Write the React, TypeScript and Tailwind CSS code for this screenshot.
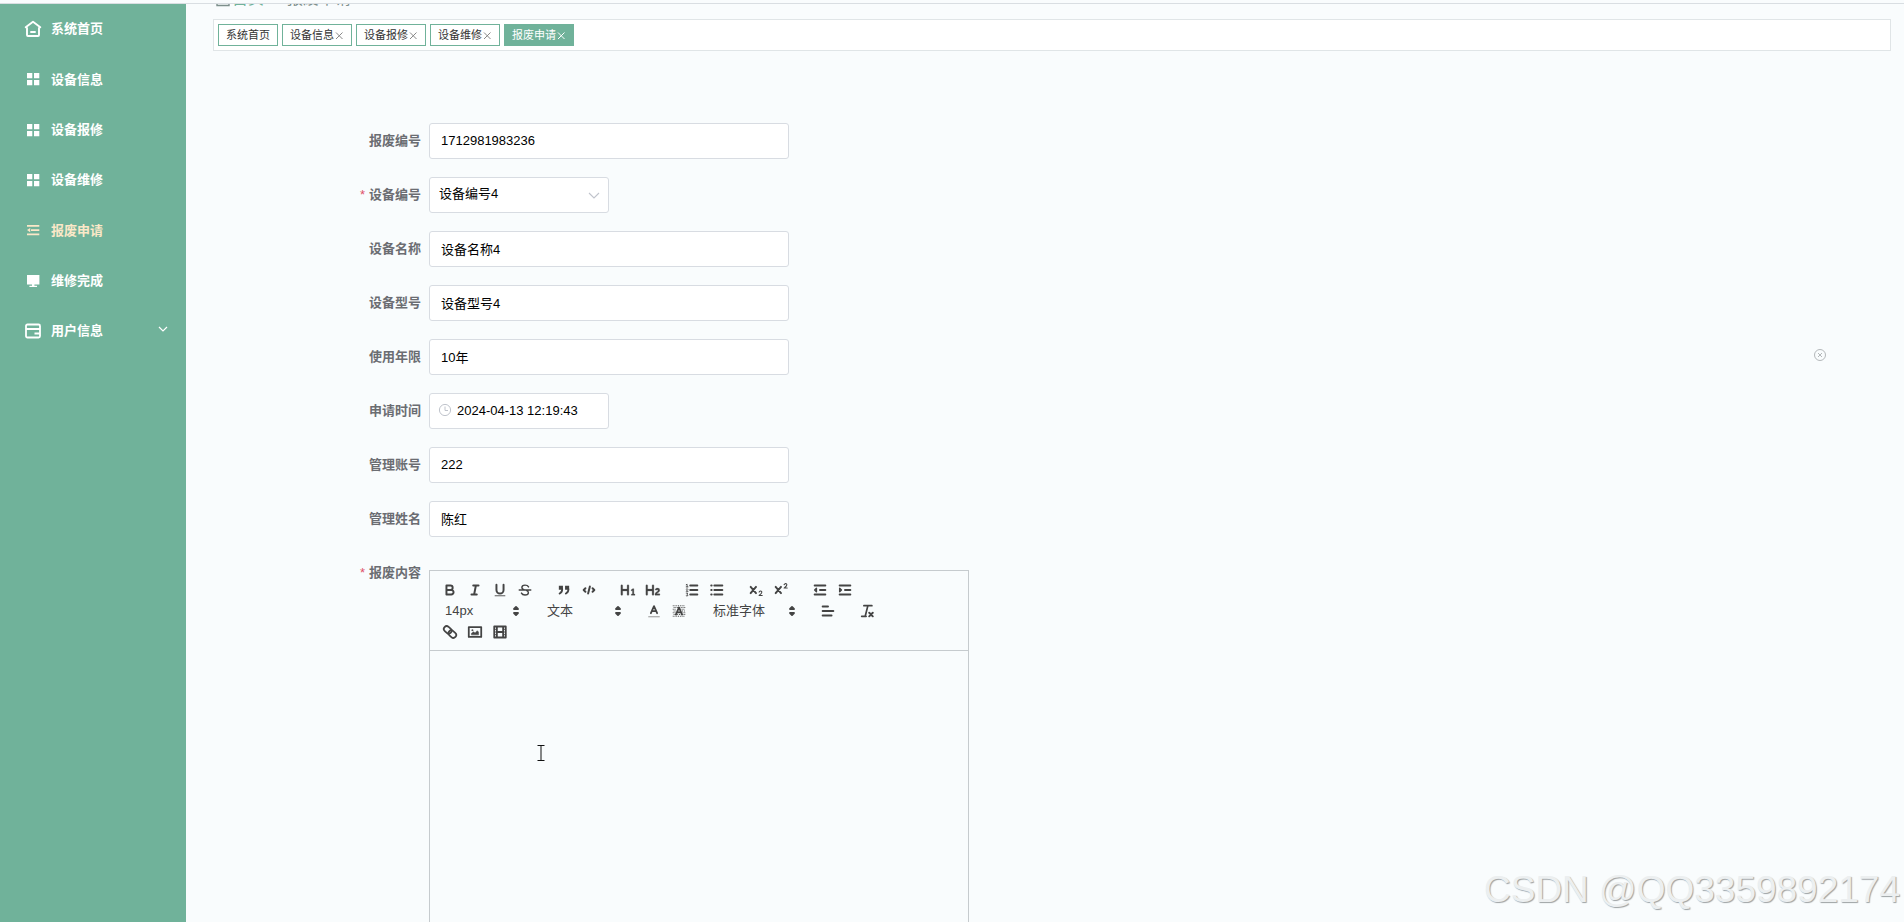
import type { ReactNode } from 'react';

const ink = 'stroke-[#444]';

function Svg({ children, size = 'size-4' }: { children: ReactNode; size?: string }) {
  return (
    <svg viewBox="0 0 18 18" className={`${size} ${ink} fill-none`} strokeWidth="2.2" strokeLinecap="round" strokeLinejoin="round" aria-hidden="true">
      {children}
    </svg>
  );
}

function Home() {
  return (
    <svg viewBox="0 0 18 18" className="size-[18px]" fill="none" stroke="currentColor" strokeWidth="1.9" strokeLinejoin="round" strokeLinecap="round" aria-hidden="true">
      <path d="M9 1.8 L1.7 7.2 L3 8 V15 Q3 16 4 16 H14 Q15 16 15 15 V8 L16.3 7.2 Z" />
      <path d="M7 12 H11" />
    </svg>
  );
}

function Menu() {
  return (
    <svg viewBox="0 0 18 18" className="size-[18px]" fill="currentColor" aria-hidden="true">
      <path d="M3 3H8.3V8.3H3ZM10 3H15.3V8.3H10ZM3 10H8.3V15.3H3ZM10 10H15.3V15.3H10Z" />
    </svg>
  );
}

function Fold() {
  return (
    <svg viewBox="0 0 18 18" className="size-[18px]" fill="currentColor" aria-hidden="true">
      <path d="M3 4H15.3V5.8H3ZM7 8.2H15.3V10H7ZM3 9.1L6.2 7V11.2ZM3 12.4H15.3V14.2H3Z" />
    </svg>
  );
}

function Monitor() {
  return (
    <svg viewBox="0 0 18 18" className="size-[18px]" fill="currentColor" aria-hidden="true">
      <path d="M3 3 H15.4 V12.4 H3 Z M8 12 H10.4 V13.8 H13 V15 H5.4 V13.8 H8 Z" />
    </svg>
  );
}

function Card() {
  return (
    <svg viewBox="0 0 18 18" className="size-[18px]" fill="none" stroke="currentColor" strokeWidth="1.8" aria-hidden="true">
      <rect x="2" y="2.5" width="14" height="13" rx="1.4" />
      <path d="M2 7 H16 M10.5 11.5 H16" />
    </svg>
  );
}

const menu = [
  { label: '系统首页', icon: <Home /> },
  { label: '设备信息', icon: <Menu /> },
  { label: '设备报修', icon: <Menu /> },
  { label: '设备维修', icon: <Menu /> },
  { label: '报废申请', icon: <Fold />, active: true },
  { label: '维修完成', icon: <Monitor /> },
  { label: '用户信息', icon: <Card />, more: true },
];

const tabs = ['设备信息', '设备报修', '设备维修', '报废申请'];

function Cross() {
  return (
    <svg viewBox="0 0 10 11" className="h-[11px] w-[10px]" stroke="currentColor" strokeWidth="1" aria-hidden="true">
      <path d="M2 2.5 L8.5 9 M8.5 2.5 L2 9" />
    </svg>
  );
}

function Row({ id, label, required, children }: { id: string; label: string; required?: boolean; children: ReactNode }) {
  return (
    <div className="flex h-9 items-center">
      <label htmlFor={id} className="w-[216px] shrink-0 pr-2 text-right font-bold text-[#6b6d72]">
        {required && <span className="mr-1 font-normal text-[#e0506a]">*</span>}
        {label}
      </label>
      {children}
    </div>
  );
}

const box = 'h-9 rounded-[3px] border border-[#d8dce2] bg-white pb-[2px] text-[13px] text-black outline-none';

function TextRow({ id, label, value }: { id: string; label: string; value: string }) {
  return (
    <Row id={id} label={label}>
      <input id={id} defaultValue={value} className={`${box} w-[360px] px-[11px]`} />
    </Row>
  );
}

function Tool({ label, children }: { label: string; children: ReactNode }) {
  return (
    <button type="button" aria-label={label} className="flex h-[21px] w-[25px] items-center justify-center">
      {children}
    </button>
  );
}

function Group({ children }: { children: ReactNode }) {
  return <div className="mr-[14px] flex">{children}</div>;
}

function Picker({ label, width }: { label: string; width: string }) {
  return (
    <button type="button" className={`flex h-[21px] items-center justify-between pl-2 text-[13px] text-[#444] ${width}`}>
      {label}
      <svg viewBox="0 0 18 18" className="size-[18px] fill-[#444] stroke-[#444]" strokeWidth="1.8" strokeLinejoin="round" aria-hidden="true">
        <path d="M7 11 L9 13 L11 11 Z M7 7 L9 5 L11 7 Z" />
      </svg>
    </button>
  );
}

function Heading({ two }: { two?: boolean }) {
  return (
    <svg viewBox="0 0 18 18" className="size-4 fill-[#444] stroke-[#444]" strokeWidth=".3" aria-hidden="true">
      <path d="M10,4V14a1,1,0,0,1-2,0V10H3v4a1,1,0,0,1-2,0V4A1,1,0,0,1,3,4V8H8V4a1,1,0,0,1,2,0Z" />
      {two ? (
        <path d="M16.73975,13.81445v.43945a.54085.54085,0,0,1-.605.60547H11.855a.58392.58392,0,0,1-.64893-.60547V14.0127c0-2.90527,3.39941-3.42187,3.39941-4.55469a.77675.77675,0,0,0-.84717-.78125,1.17684,1.17684,0,0,0-.83594.38477c-.2749.26367-.561.374-.85791.13184l-.4292-.34082c-.30811-.24219-.38525-.51758-.1543-.81445a2.97155,2.97155,0,0,1,2.45361-1.17676,2.45393,2.45393,0,0,1,2.68408,2.40918c0,2.45312-3.1792,2.92676-3.27832,3.93848h2.79443A.54085.54085,0,0,1,16.73975,13.81445Z" />
      ) : (
        <path d="M12.8,15 V13.6 H14 V9.6 L13 10.2 L12.3,9.1 L14.3,7.5 H15.6 V13.6 H16.8 V15 Z" />
      )}
    </svg>
  );
}

function Script({ sup }: { sup?: boolean }) {
  return (
    <svg viewBox="0 0 18 18" className="size-4 fill-none stroke-[#444]" strokeLinecap="round" strokeLinejoin="round" aria-hidden="true">
      <path strokeWidth="2.2" d="M3 5.5 L9 12.5 M9 5.5 L3 12.5" />
      <path strokeWidth="1.2" d={sup ? 'M12.5 3 Q14.2 .8 15.5 2.6 Q16 4 12.5 6.8 H16' : 'M12.5 11.3 Q14.2 9.2 15.5 11 Q16 12.4 12.5 15.2 H16'} />
    </svg>
  );
}

function Toolbar() {
  return (
    <div className="flex flex-wrap border-b border-[#c6cbce] px-[7px] pt-2 pb-[8px]">
      <Group>
        <Tool label="粗体"><Svg><path d="M5,4H9.5A2.5,2.5,0,0,1,12,6.5v0A2.5,2.5,0,0,1,9.5,9H5V4ZM5,9h5.5A2.5,2.5,0,0,1,13,11.5v0A2.5,2.5,0,0,1,10.5,14H5V9Z" /></Svg></Tool>
        <Tool label="斜体"><Svg><path d="M7 4H13M5 14H11M8 14L10 4" /></Svg></Tool>
        <Tool label="下划线"><Svg><path d="M5,3V9a4.012,4.012,0,0,0,4,4H9a4.012,4.012,0,0,0,4-4V3" /><path strokeWidth="1" d="M3.5 15.5H14.5" /></Svg></Tool>
        <Tool label="删除线">
          <Svg>
            <path strokeWidth="1.6" d="M2.5 9H15.5M13 5.5Q12 3.5 9 3.5Q5.5 3.5 5.5 6.2Q5.5 8 8.5 8.8M5 12.5Q6 14.6 9 14.6Q12.8 14.6 12.8 12Q12.8 10.2 10.5 9.3" />
          </Svg>
        </Tool>
      </Group>
      <Group>
        <Tool label="引用">
          <svg viewBox="0 0 18 18" className="size-4 fill-[#444] stroke-[#444]" aria-hidden="true">
            <path strokeWidth="2" fill="none" strokeLinecap="round" d="M7,8c0,4.031-3,5-3,5M14,8c0,4.031-3,5-3,5" />
            <path d="M4 5H7V8H4ZM11 5H14V8H11Z" strokeWidth="1.6" />
          </svg>
        </Tool>
        <Tool label="代码"><Svg><path d="M5 7L3 9L5 11M13 7L15 9L13 11M10 5L8 13" /></Svg></Tool>
      </Group>
      <Group>
        <Tool label="标题 1"><Heading /></Tool>
        <Tool label="标题 2"><Heading two /></Tool>
      </Group>
      <Group>
        <Tool label="有序列表">
          <Svg>
            <path d="M7 4H15M7 9H15M7 14H15" />
            <path strokeWidth="1" d="M2.5 5.5H4.5M3.5 5.5V2.5L2.5 3M2.5 8Q4.5 7 4.4 8.4L2.5 10.5H4.5M2.5 12.5H4.2L3.4 14Q5 14.5 4.2 15.5Q3.4 16 2.5 15.5" />
          </Svg>
        </Tool>
        <Tool label="无序列表"><Svg><path d="M6 4H15M6 9H15M6 14H15M2.5 4H3M2.5 9H3M2.5 14H3" /></Svg></Tool>
      </Group>
      <Group>
        <Tool label="下标"><Script /></Tool>
        <Tool label="上标"><Script sup /></Tool>
      </Group>
      <Group>
        <Tool label="减少缩进"><Svg><path d="M3 14H15M3 4H15M9 9H15" /><path fill="#444" strokeWidth="1.6" d="M5 7V11L3 9Z" /></Svg></Tool>
        <Tool label="增加缩进"><Svg><path d="M3 14H15M3 4H15M9 9H15" /><path fill="#444" strokeWidth="1.6" d="M3 7V11L5 9Z" /></Svg></Tool>
      </Group>
      <Group><Picker label="14px" width="w-[88px]" /></Group>
      <Group><Picker label="文本" width="w-[88px]" /></Group>
      <Group>
        <Tool label="文字颜色">
          <Svg><path strokeWidth="1" stroke="#888" d="M3 15.5H15" /><path d="M5.5 11.5L9 3.5L12.5 11.5M6.8 9.2H11.2" strokeWidth="2" /></Svg>
        </Tool>
        <Tool label="背景颜色">
          <Svg>
            <path strokeWidth="1.2" strokeDasharray="1 1" strokeLinecap="butt" d="M2 3H16M3 5H16M2 7H6M12 7H16M3 9H5.5M12.5 9H16M2 11H5M13 11H16M3 13H16M2 15H16" />
            <path d="M5.5 13L9 5L12.5 13M6.8 10.6H11.2" strokeWidth="2" />
          </Svg>
        </Tool>
      </Group>
      <Group><Picker label="标准字体" width="w-[96px]" /></Group>
      <Group><Tool label="对齐"><Svg><path d="M3 9H15M3 14H13M3 4H9" /></Svg></Tool></Group>
      <Group>
        <Tool label="清除格式">
          <Svg><path strokeWidth="1.9" d="M5.5 3H14.5M10 3L7.2 14M3 15H8" /><path d="M11.5 11L15.5 15M15.5 11L11.5 15" /></Svg>
        </Tool>
      </Group>
      <Group>
        <Tool label="链接">
          <Svg>
            <g transform="rotate(42 9 9)" strokeWidth="2">
              <rect x="0.8" y="5.8" width="9.4" height="6.4" rx="3.2" />
              <rect x="7.8" y="5.8" width="9.4" height="6.4" rx="3.2" />
            </g>
          </Svg>
        </Tool>
        <Tool label="图片">
          <Svg>
            <path d="M2 3.5H16V14.5H2Z" strokeWidth="2" />
            <path fill="#444" strokeWidth=".5" d="M5 12V10.5L7.5 8.8L9 10L11.5 7.5L13 9V12Z" />
            <circle cx="6" cy="7" r=".8" fill="#444" strokeWidth=".4" />
          </Svg>
        </Tool>
        <Tool label="视频">
          <Svg><path d="M2.5 2.8H15.5V15.2H2.5ZM5.5 3V15M12.5 3V15M5.5 9H12.5" strokeWidth="2" /><path strokeWidth="1" d="M3 6H5M3 9H5M3 12H5M13 6H15M13 9H15M13 12H15" /></Svg>
        </Tool>
      </Group>
    </div>
  );
}

export default function App() {
  return (
    <div className="relative flex h-screen flex-col overflow-hidden bg-[#f9fcfd] font-['Liberation_Sans','Noto_Sans_CJK_SC',sans-serif] text-[13px]">
      <div className="h-1 shrink-0 border-b border-[#d9dee2]" />
      <div className="flex min-h-0 flex-1">
        <aside className="w-[186px] shrink-0 bg-[#70b29a]">
          <nav className="grid h-[352px] auto-rows-fr">
            {menu.map((m) => (
              <a key={m.label} href="#" className={`flex items-center gap-[9px] pr-4 pl-6 font-bold ${m.active ? 'text-[#fbe8c8]' : 'text-white'}`}>
                {m.icon}
                <span className="flex-1">{m.label}</span>
                {m.more && (
                  <svg viewBox="0 0 14 14" className="size-[14px]" fill="none" stroke="currentColor" strokeWidth="1.2" aria-hidden="true">
                    <path d="M3 3 L7 7 L11 3" />
                  </svg>
                )}
              </a>
            ))}
          </nav>
        </aside>
        <main className="min-w-0 flex-1 overflow-hidden">
          <div className="flex h-[15px] flex-col justify-end overflow-hidden pb-3 pl-[30px]">
            <div className="flex shrink-0 items-center text-base leading-4 text-[#7d8f8c]">
              <svg viewBox="0 0 14 16" className="mr-[2px] h-4 w-[14px]" fill="none" stroke="currentColor" strokeWidth="1.4" aria-hidden="true">
                <path d="M2 2H12V9H2ZM1 12H13V14.5H1Z" />
              </svg>
              <span className="text-[#70b29a]">首页</span>
              <span className="w-[23px]" />
              <span>报废申请</span>
            </div>
          </div>
          <div className="mr-[13px] ml-[27px] flex h-8 items-center gap-1 border border-[#e0e5e7] bg-white px-1 text-[11px]">
            <button type="button" className="h-[22px] border border-[#70b29a] px-[7px] text-[#333]">系统首页</button>
            {tabs.map((t) => (
              <button
                key={t}
                type="button"
                className={`flex h-[22px] items-center border border-[#70b29a] px-[7px] ${t === '报废申请' ? 'bg-[#70b29a] text-white' : 'text-[#333]'}`}
              >
                {t}
                <span className={t === '报废申请' ? 'text-white' : 'text-[#888]'}><Cross /></span>
              </button>
            ))}
          </div>
          <form className="mt-[72px] ml-[27px] flex flex-col gap-[18px]">
            <TextRow id="no" label="报废编号" value="1712981983236" />
            <Row id="device" label="设备编号" required>
              <div className="grid w-[180px] items-center">
                <select id="device" className={`${box} col-start-1 row-start-1 w-full appearance-none px-[9px]`}>
                  <option>设备编号4</option>
                </select>
                <svg viewBox="0 0 14 14" className="pointer-events-none col-start-1 row-start-1 mr-2 size-[14px] justify-self-end" fill="none" stroke="#c0c4cc" strokeWidth="1.1" aria-hidden="true">
                  <path d="M2 5 L7 10 L12 5" />
                </svg>
              </div>
            </Row>
            <TextRow id="name" label="设备名称" value="设备名称4" />
            <TextRow id="model" label="设备型号" value="设备型号4" />
            <TextRow id="years" label="使用年限" value="10年" />
            <Row id="time" label="申请时间">
              <div className="grid w-[180px] items-center">
                <input id="time" defaultValue="2024-04-13 12:19:43" className={`${box} col-start-1 row-start-1 w-full pr-2 pl-[27px]`} />
                <svg viewBox="0 0 14 14" className="pointer-events-none col-start-1 row-start-1 mb-[2px] ml-[9px] size-[14px]" fill="none" stroke="#c0c4cc" aria-hidden="true">
                  <circle cx="7" cy="7" r="5.6" />
                  <path d="M7 3.5V7.5H10" />
                </svg>
              </div>
            </Row>
            <TextRow id="account" label="管理账号" value="222" />
            <TextRow id="person" label="管理姓名" value="陈红" />
            <div className="flex">
              <label htmlFor="content" className="w-[216px] shrink-0 pr-2 text-right leading-9 font-bold text-[#6b6d72]">
                <span className="mr-1 font-normal text-[#e0506a]">*</span>报废内容
              </label>
              <div className="mt-[15px] w-[540px] border border-[#c6cbce]">
                <Toolbar />
                <textarea id="content" className="block h-[360px] w-full resize-none bg-transparent p-3 outline-none" />
              </div>
            </div>
          </form>
        </main>
      </div>
      <svg viewBox="0 0 14 14" className="absolute top-[348px] right-[77px] size-[14px]" fill="none" stroke="#b4b8ba" aria-hidden="true">
        <circle cx="7" cy="7" r="5.5" />
        <path d="M5 5L9 9M9 5L5 9" />
      </svg>
      <svg viewBox="0 0 8 18" className="absolute top-[744px] left-[537px] h-[18px] w-2" fill="none" stroke="#111" aria-hidden="true">
        <path d="M.5 1.5H7.5M.5 16.5H7.5M4 1.5V16.5" />
      </svg>
      <div className="absolute right-1 bottom-2 text-[37px] leading-[48px] text-[#eceff0] [text-shadow:1px_1px_1px_#9da2a4]">CSDN @QQ3359892174</div>
    </div>
  );
}
